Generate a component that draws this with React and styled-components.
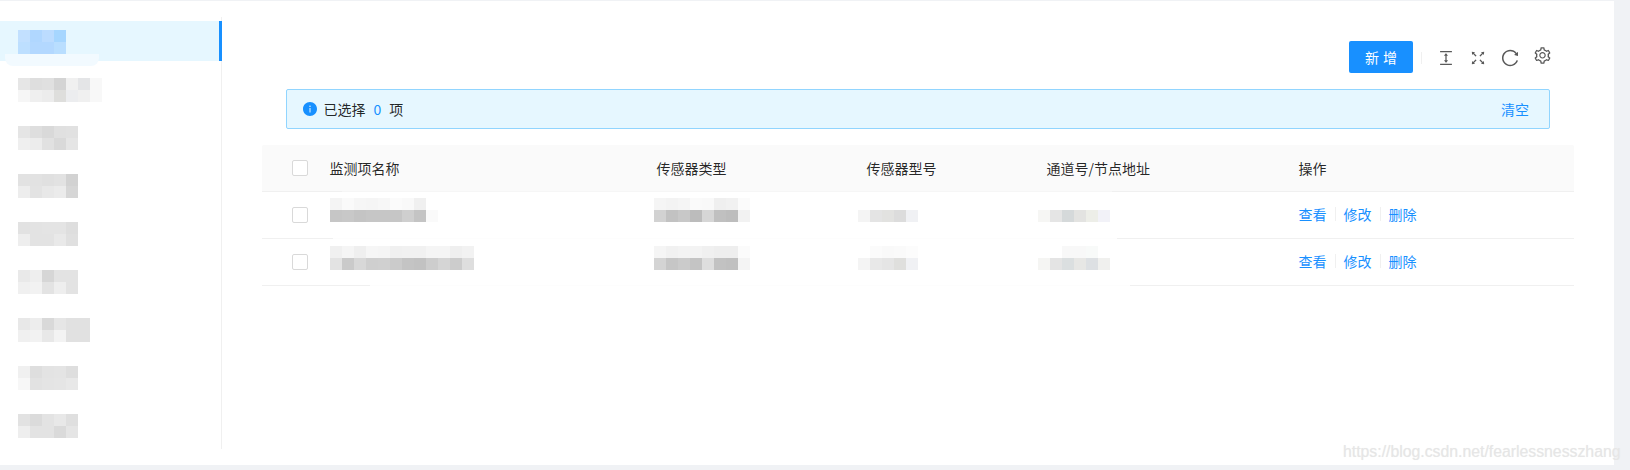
import React from "react";
import styled, { createGlobalStyle } from "styled-components";
import {
    AiFillInfoCircle,
    AiOutlineColumnHeight,
    AiOutlineFullscreen,
    AiOutlineReload,
    AiOutlineSetting,
} from "react-icons/ai";

const GlobalStyle = createGlobalStyle`
    html, body {
        margin: 0;
        padding: 0;
        background: #f0f2f5;
    }

    body {
        font-family: "Noto Sans CJK SC", "Liberation Sans", sans-serif;
        font-size: 14px;
        color: rgba(0, 0, 0, .85);
    }
`;

const Page = styled.div`
    position: relative;
    width: 1630px;
    height: 470px;
    padding: 1px 16px 5px 0;
    box-sizing: border-box;
    overflow: hidden;
    background: #f0f2f5;
`;

const Panel = styled.div`
    display: flex;
    height: 100%;
    background: #fff;
`;

const Sidebar = styled.nav`
    width: 222px;
    flex-shrink: 0;
    box-sizing: border-box;
    margin: 16px 0;
    padding-top: 4px;
    border-right: 1px solid #f0f0f0;
    display: flex;
    flex-direction: column;
    gap: 8px;
`;

const MenuItem = styled.div`
    position: relative;
    height: 40px;
    margin-right: -1px;
    box-sizing: border-box;
    padding: 9px 0 0 18px;
    background: ${(p) => (p.$active ? "#e6f7ff" : "transparent")};
    border-right: ${(p) => (p.$active ? "3px solid #1890ff" : "0")};
`;

const MenuSmudge = styled.div`
    position: absolute;
    left: 5px;
    top: 33px;
    width: 94px;
    height: 12px;
    border-radius: 0 0 8px 8px;
    background: #f2faff;
`;

const Mosaic = styled.div`
    position: relative;
    display: grid;
    grid-auto-rows: 12px;
    grid-template-columns: repeat(${(p) => p.$cols}, 12px);
    width: max-content;
    margin-left: ${(p) => p.$shift || 0}px;
`;

const Cell = styled.i.attrs((p) => ({ style: { background: p.$color } }))`
    display: block;
`;

const Content = styled.main`
    flex: 1;
    min-width: 0;
    padding: 40px 40px 0;
`;

const Toolbar = styled.div`
    display: flex;
    align-items: center;
    justify-content: flex-end;
    height: 32px;
    padding-right: 16px;
`;

const AddButton = styled.button`
    width: 64px;
    height: 32px;
    padding: 0;
    border: 0;
    border-radius: 2px;
    color: #fff;
    background: #1890ff;
    font: inherit;
    word-spacing: 1px;
`;

const ToolDivider = styled.span`
    width: 1px;
    height: 12px;
    margin: 2px 8px 0;
    background: #f0f0f0;
`;

const ToolIcon = styled.span`
    display: flex;
    align-items: center;
    justify-content: center;
    width: 32px;
    height: 32px;
    margin-top: ${(p) => p.$lift}px;
    color: #595959;
    font-size: ${(p) => p.$size}px;
`;

const Alert = styled.div`
    display: flex;
    align-items: center;
    height: 40px;
    box-sizing: border-box;
    margin: 16px 24px;
    padding: 0 20px 0 15px;
    border: 1px solid #91d5ff;
    border-radius: 2px;
    background: #e6f7ff;

    & > svg {
        color: #1890ff;
        font-size: 16px;
        margin-right: 5.5px;
    }
`;

const Count = styled.span`
    margin: 0 8px;
    color: #1890ff;
`;

const Clear = styled.a`
    margin-left: auto;
    color: #1890ff;
`;

const Row = styled.div`
    position: relative;
    display: grid;
    grid-template-columns: 52px 327px 210px 180px 252px 291px;
    align-items: center;
    height: 47px;
    box-sizing: border-box;
    border-bottom: 1px solid #f0f0f0;
`;

const HeadRow = styled(Row)`
    border-radius: 2px 2px 0 0;
    background: #fafafa;
`;

const Retouch = styled.div`
    position: absolute;
    left: ${(p) => p.$left}px;
    width: ${(p) => p.$width}px;
    bottom: -1px;
    height: 1px;
    background: ${(p) => p.$color};
`;

const Check = styled.span`
    display: block;
    width: 16px;
    height: 16px;
    box-sizing: border-box;
    margin-left: 30px;
    border: 1px solid #d9d9d9;
    border-radius: 2px;
    background: #fff;
`;

const HeadCell = styled.div`
    padding-left: 15.5px;
`;

const MosaicCell = styled.div`
    align-self: start;
    padding: ${(p) => p.$top}px 0 0 16px;
`;

const Actions = styled.div`
    display: flex;
    align-items: center;
    padding: 0 0 2px 15.5px;
    color: #1890ff;
`;

const ActionDivider = styled.span`
    width: 1px;
    height: 14px;
    margin: 0 8px;
    background: #f0f0f0;
`;

const Watermark = styled.div`
    position: absolute;
    left: 1343px;
    top: 443px;
    font-family: "Liberation Sans", Arial, sans-serif;
    font-size: 15.8px;
    line-height: 18px;
    white-space: nowrap;
    color: #e6e6e6;
    text-shadow: 0 0 1px #eeeeee;
`;

const g = (s) => s.split(" ").map((c) => "#" + c);

const menu = [
    ["c2e0ff b0d7ff bcdcff a6d6ff bddfff b3d8ff b3d8ff b9deff", 4],
    ["e6e6e6 dedede e0e0e0 d4d4d4 f0f0f0 e4e5e7 f8f8f8 f6f6f6 efefef ececec dededc ecedef f0f0f0 f8f8f8", 7],
    ["e5e5e5 dedede d9d9d9 e0e0e0 e1e1e1 efefef ececec e1e1e1 d9d9d9 e5e5e5", 5],
    ["e2e2e2 e2e2e2 e0e0e0 e2e2e2 d2d2d2 ededed e3e3e3 e8e8e8 ebebeb d6d6d6", 5],
    ["e2e2e2 e3e3e3 e4e4e4 e4e4e4 dedede eeeeee e3e3e3 e3e3e3 e9e9e9 e0e0e0", 5],
    ["e9e9e9 eeeeee d6d6d6 e3e3e3 e3e3e3 f0f0f0 f2f2f2 e3e3e3 eeeeee e3e3e3", 5],
    ["e8e8e8 ededed d9d9d9 e6e6e6 e1e1e1 e1e1e1 f0f0f0 f2f2f2 e8e8e8 f3f3f3 e1e1e1 e1e1e1", 6],
    ["f0f0f0 dedede e3e3e3 e4e4e4 dedede f7f7f7 e2e2e2 e4e4e4 e5e5e5 e8e8e8", 5],
    ["e2e2e2 dbdbdb e3e3e3 e8e8e8 dfdfdf eeeeee e3e3e3 e3e3e3 dadada e5e5e5", 5],
];

const rows = [
    {
        top: 6,
        patch: { left: 71, width: 784 },
        cells: [
            ["f4f4f4 fafafa f6f6f6 f5f5f5 f7f7f7 fbfbfb f9f9f9 f0f0f0 ffffff c6c6c6 c8c8c8 c4c4c4 c6c6c6 c6c6c6 c6c6c6 cfcfcf c4c4c4 fafafa", 9, 0],
            ["f5f5f5 f3f3f3 f5f5f5 fafafa f9f9f9 efefef f1f1f1 fbfbfb d2d2d2 c2c2c2 c8c8c8 bcbcbc d6d6d6 c0c0c0 bdbdbd f2f2f2", 8, -3],
            ["ffffff ffffff ffffff ffffff ffffff f4f4f4 e4e4e4 e2e2e0 dcdcdc f0f1f4", 5, -9],
            ["ffffff ffffff ffffff ffffff ffffff ffffff f6f6f4 e5e5e5 d5d9da e3e3e1 edeee8 f2f2f8", 6, -9],
        ],
    },
    {
        top: 7,
        patch: { left: 108, width: 760 },
        cells: [
            ["f0f0f0 f5f5f5 efefef f6f6f6 f5f5f5 f0f0f0 f1f1f1 f1f1f1 f5f5f5 f5f5f5 efefef f2f2f2 e3e3e3 cacaca d8d8d8 cfcfcf d0d0d0 cbcbcb c4c4c4 c2c2c2 cdcdcd d5d5d5 cccccc dedede", 12, 0],
            ["f5f5f5 f1f1f1 f3f3f3 f3f3f3 f0f0f0 eeeeee eeeeee fbfbfb d4d4d4 c6c6c6 cbcbcb c4c4c4 dedede c2c2c2 c0c0c0 f4f4f4", 8, -3],
            ["ffffff fbfbfb f9f9f9 fafafa fcfcfc f4f4f4 e8e8e8 e5e5e5 dfdfdd f0f1f4", 5, -9],
            ["ffffff ffffff f8f8f8 f8f8f8 f8faf9 ffffff f5f5f3 e4e4e4 dbdfe0 e7e7e5 dde0e3 f0f0ee", 6, -9],
        ],
    },
];

const Blur = ({ colors, cols, shift }) => (
    <Mosaic $cols={cols} $shift={shift}>
        {g(colors).map((c, i) => (
            <Cell key={i} $color={c} />
        ))}
    </Mosaic>
);

const App = () => {
    return (
        <Page>
            <GlobalStyle />
            <Panel>
                <Sidebar>
                    {menu.map(([colors, cols], i) => (
                        <MenuItem key={i} $active={i === 0}>
                            {i === 0 && <MenuSmudge />}
                            <Blur colors={colors} cols={cols} />
                        </MenuItem>
                    ))}
                </Sidebar>
                <Content>
                    <Toolbar>
                        <AddButton>新 增</AddButton>
                        <ToolDivider />
                        <ToolIcon $size={18} $lift={1}><AiOutlineColumnHeight /></ToolIcon>
                        <ToolIcon $size={18} $lift={1}><AiOutlineFullscreen /></ToolIcon>
                        <ToolIcon $size={20} $lift={2}><AiOutlineReload /></ToolIcon>
                        <ToolIcon $size={19} $lift={-3}><AiOutlineSetting /></ToolIcon>
                    </Toolbar>
                    <Alert>
                        <AiFillInfoCircle />
                        已选择<Count>0</Count>项
                        <Clear>清空</Clear>
                    </Alert>
                    <HeadRow>
                        <Check />
                        <HeadCell>监测项名称</HeadCell>
                        <HeadCell>传感器类型</HeadCell>
                        <HeadCell>传感器型号</HeadCell>
                        <HeadCell>通道号/节点地址</HeadCell>
                        <HeadCell>操作</HeadCell>
                        <Retouch $left={80} $width={770} $color="#f6f6f6" />
                    </HeadRow>
                    {rows.map((row, i) => (
                        <Row key={i}>
                            <Check />
                            {row.cells.map(([colors, cols, shift], j) => (
                                <MosaicCell key={j} $top={row.top}>
                                    <Blur colors={colors} cols={cols} shift={shift} />
                                </MosaicCell>
                            ))}
                            <Actions>
                                查看<ActionDivider />修改<ActionDivider />删除
                            </Actions>
                            <Retouch $left={row.patch.left} $width={row.patch.width} $color="#fdfdfd" />
                        </Row>
                    ))}
                </Content>
            </Panel>
            <Watermark>https://blog.csdn.net/fearlessnesszhang</Watermark>
        </Page>
    );
};

export default App;
